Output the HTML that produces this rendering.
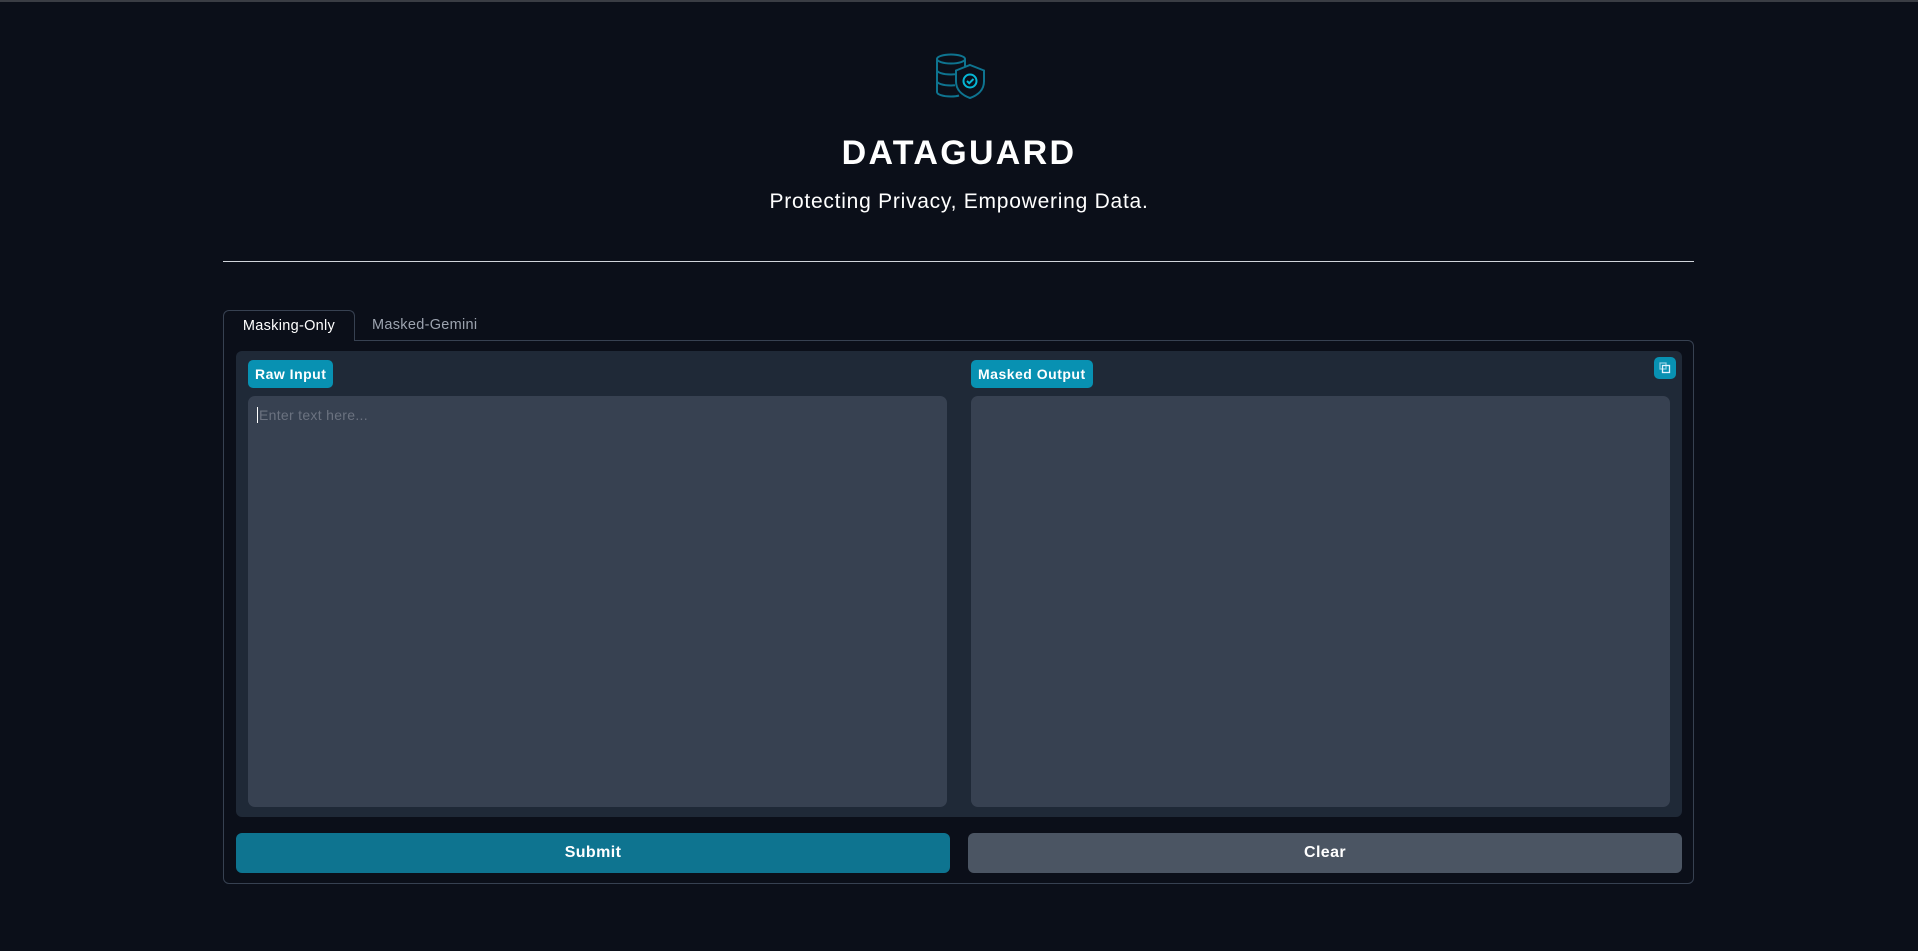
<!DOCTYPE html>
<html><head><meta charset="utf-8"><style>
*{box-sizing:border-box;margin:0;padding:0}
body{width:1918px;height:951px;background:#0b0f19;font-family:"Liberation Sans",sans-serif;position:relative;overflow:hidden;border-top:2px solid #3a3d44}
.a{position:absolute}
h1{position:absolute;left:0;width:1918px;top:132px;text-align:center;color:#fff;font-size:34px;font-weight:bold;letter-spacing:2.3px}
.sub{left:0;width:1918px;top:188px;text-align:center;color:#fff;font-size:21px;letter-spacing:0.75px}
.hr{left:223px;width:1471px;top:259px;height:1px;background:#d1d5db}
.tab1{left:223px;top:308px;width:132px;height:31px;border:1px solid #374151;border-bottom:none;border-radius:6px 6px 0 0;background:#0b0f19;color:#fff;font-size:14.5px;text-align:center;line-height:30px;z-index:2;letter-spacing:0.3px}
.tab2{left:372px;top:308px;color:#9ca3af;font-size:14.5px;line-height:30px;letter-spacing:0.3px}
.panel{left:223px;top:338px;width:1471px;height:544px;border:1px solid #374151;border-radius:0 6px 6px 6px}
.inner{left:236px;top:349px;width:1446px;height:466px;background:#1f2937;border-radius:6px}
.lbl{height:28px;background:#0891b2;color:#fff;font-weight:bold;font-size:14px;line-height:28px;padding:0 7px;border-radius:5px;letter-spacing:0.5px}
.ta{background:#374151;border-radius:7px;top:394px;width:699px;height:411px}
.btn{top:831px;height:40px;border-radius:6px;color:#fff;font-weight:bold;font-size:16px;text-align:center;line-height:40px;letter-spacing:0.4px}
</style></head><body>
<svg class="a" style="left:933px;top:50px" width="54" height="50" viewBox="0 0 54 50" fill="none" stroke="#0e7490" stroke-width="2">
<ellipse cx="18" cy="7" rx="14" ry="4.5"/>
<path d="M4 7v33c0 2.5 6 4.5 14 4.5 3 0 6-.3 8-1"/>
<path d="M32 7v8"/>
<path d="M4 18c0 2.5 6 4.5 14 4.5 2 0 3-.1 4-.2M4 29c0 2.5 6 4.5 14 4.5 2 0 3-.1 4-.2"/>
<path d="M37 13l14 5.5v11c0 9-7 14-14 16.5-7-2.5-14-7.5-14-16.5v-11z" fill="#0b0f19"/>
<circle cx="37" cy="29" r="6.5" stroke="#06b6d4"/>
<path d="M34 29l2.2 2.2L40.5 27" stroke="#06b6d4"/>
</svg>
<h1>DATAGUARD</h1>
<div class="a sub">Protecting Privacy, Empowering Data.</div>
<div class="a hr"></div>
<div class="a panel"></div>
<div class="a tab1">Masking-Only</div>
<div class="a tab2">Masked-Gemini</div>
<div class="a inner"></div>
<div class="a lbl" style="left:248px;top:358px">Raw Input</div>
<div class="a lbl" style="left:971px;top:358px">Masked Output</div>
<div class="a" style="left:1654px;top:355px;width:22px;height:22px;background:#0891b2;border-radius:5px"><svg width="22" height="22" viewBox="0 0 22 22" fill="none" stroke="#e0f2fe" stroke-width="1.3"><rect x="6" y="6" width="6" height="6" opacity=".6"/><rect x="8.5" y="8.5" width="7" height="7"/></svg></div>
<div class="a ta" style="left:248px"><div style="position:absolute;left:9px;top:11px;color:#6b7280;font-size:14px;border-left:1px solid #fff;padding-left:1px;letter-spacing:0.3px">Enter text here...</div></div>
<div class="a ta" style="left:971px"></div>
<div class="a btn" style="left:236px;width:714px;background:#0e7490">Submit</div>
<div class="a btn" style="left:968px;width:714px;background:#4b5563">Clear</div>
</body></html>
